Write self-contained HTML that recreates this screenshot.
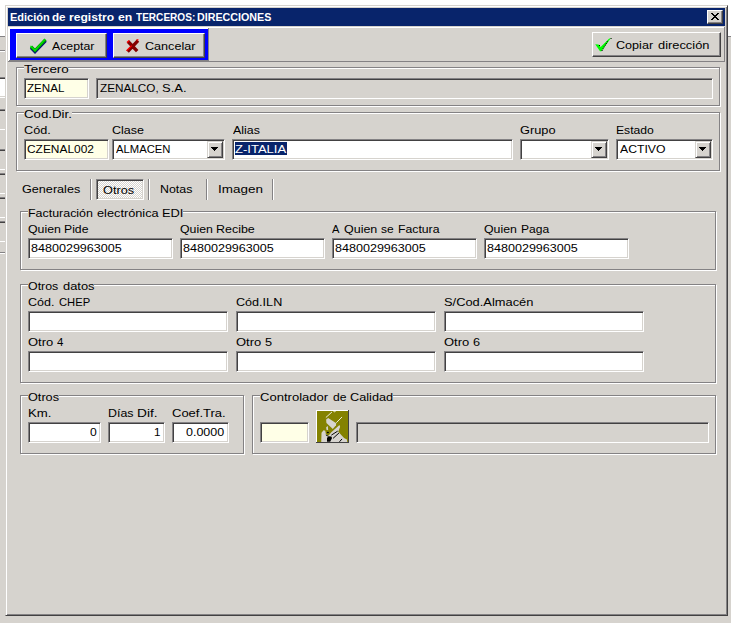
<!DOCTYPE html>
<html><head><meta charset="utf-8"><title>Edición de registro en TERCEROS: DIRECCIONES</title>
<style>
html,body{margin:0;padding:0;background:#d6d3ce}
body{width:731px;height:623px;overflow:hidden;background:#d6d3ce;position:relative;font-family:"Liberation Sans",sans-serif;font-size:11px;line-height:13px;color:#000}
div{position:absolute;box-sizing:border-box}
.t{position:absolute;white-space:pre;transform-origin:0 0;font-family:"Liberation Sans",sans-serif;font-size:11px;line-height:13px;height:13px}
.win{background:#d6d3ce;border:1px solid;border-color:#d6d3ce #424142 #424142 #d6d3ce;box-shadow:inset 1px 1px 0 #fff,inset -1px -1px 0 #848284}
.sk{border:1px solid;border-color:#848284 #fff #fff #848284;box-shadow:inset 1px 1px 0 #424142,inset -1px -1px 0 #d6d3ce}
.rb{background:#d6d3ce;border:1px solid;border-color:#fff #424142 #424142 #fff;box-shadow:inset -1px -1px 0 #848284}
.rb2{background:#d6d3ce;border:1px solid;border-color:#d6d3ce #424142 #424142 #d6d3ce;box-shadow:inset 1px 1px 0 #fff,inset -1px -1px 0 #848284}
.gb{border:1px solid #848284;box-shadow:1px 1px 0 #fff,inset 1px 1px 0 #fff}
.chk{background:conic-gradient(#fff 25%,#d6d3ce 0 50%,#fff 0 75%,#d6d3ce 0) 0 0/2px 2px}
</style></head>
<body>
<div style="left:0px;top:0px;width:731px;height:5px;background:#fff;"></div>
<div style="left:0px;top:0px;width:5px;height:36px;background:#fff;"></div>
<div style="left:728px;top:0px;width:3px;height:36px;background:#fff;"></div>
<div style="left:0px;top:36px;width:5px;height:1px;background:#848284;"></div>
<div style="left:728px;top:36px;width:3px;height:1px;background:#848284;"></div>
<div style="left:0px;top:50px;width:5px;height:1px;background:#848284;"></div>
<div style="left:0px;top:51px;width:5px;height:1px;background:#fff;"></div>
<div style="left:0px;top:77px;width:5px;height:1px;background:#848284;"></div>
<div style="left:0px;top:78px;width:5px;height:1px;background:#424142;"></div>
<div style="left:0px;top:79px;width:5px;height:17px;background:#fff;"></div>
<div style="left:0px;top:97px;width:5px;height:1px;background:#fff;"></div>
<div style="left:0px;top:109px;width:5px;height:1px;background:#848284;"></div>
<div style="left:0px;top:110px;width:5px;height:1px;background:#424142;"></div>
<div style="left:0px;top:129px;width:5px;height:1px;background:#fff;"></div>
<div style="left:0px;top:149px;width:5px;height:1px;background:#848284;"></div>
<div style="left:0px;top:150px;width:5px;height:1px;background:#424142;"></div>
<div style="left:0px;top:169px;width:5px;height:1px;background:#fff;"></div>
<div style="left:0px;top:173px;width:5px;height:1px;background:#848284;"></div>
<div style="left:0px;top:174px;width:5px;height:1px;background:#424142;"></div>
<div style="left:0px;top:193px;width:5px;height:1px;background:#fff;"></div>
<div style="left:0px;top:197px;width:5px;height:1px;background:#848284;"></div>
<div style="left:0px;top:198px;width:5px;height:1px;background:#424142;"></div>
<div style="left:0px;top:217px;width:5px;height:1px;background:#fff;"></div>
<div style="left:0px;top:221px;width:5px;height:1px;background:#848284;"></div>
<div style="left:0px;top:222px;width:5px;height:1px;background:#424142;"></div>
<div style="left:0px;top:241px;width:5px;height:1px;background:#fff;"></div>
<div style="left:0px;top:252px;width:5px;height:1px;background:#848284;"></div>
<div style="left:0px;top:253px;width:5px;height:1px;background:#fff;"></div>
<div class="win" style="left:5px;top:5px;width:723px;height:611px"></div>
<div style="left:8px;top:8px;width:717px;height:18px;background:#08246b;"></div>
<div class="rb" style="left:707px;top:10px;width:16px;height:14px"></div>
<div style="left:711px;top:13px;width:2px;height:1px;background:#000;"></div>
<div style="left:717px;top:13px;width:2px;height:1px;background:#000;"></div>
<div style="left:712px;top:14px;width:2px;height:1px;background:#000;"></div>
<div style="left:716px;top:14px;width:2px;height:1px;background:#000;"></div>
<div style="left:713px;top:15px;width:4px;height:1px;background:#000;"></div>
<div style="left:714px;top:16px;width:2px;height:1px;background:#000;"></div>
<div style="left:713px;top:17px;width:4px;height:1px;background:#000;"></div>
<div style="left:712px;top:18px;width:2px;height:1px;background:#000;"></div>
<div style="left:716px;top:18px;width:2px;height:1px;background:#000;"></div>
<div style="left:711px;top:19px;width:2px;height:1px;background:#000;"></div>
<div style="left:717px;top:19px;width:2px;height:1px;background:#000;"></div>
<div style="left:8px;top:27px;width:717px;height:1px;background:#fff;"></div>
<div style="left:8px;top:27px;width:1px;height:35px;background:#fff;"></div>
<div style="left:8px;top:61px;width:717px;height:1px;background:#848284;"></div>
<div style="left:724px;top:27px;width:1px;height:35px;background:#848284;"></div>
<div style="left:9px;top:28px;width:200px;height:1px;background:#fff;"></div>
<div style="left:9px;top:28px;width:1px;height:33px;background:#fff;"></div>
<div style="left:9px;top:60px;width:200px;height:1px;background:#848284;"></div>
<div style="left:208px;top:28px;width:1px;height:33px;background:#848284;"></div>
<div style="left:10px;top:29px;width:198px;height:31px;background:#0000ff;"></div>
<div class="rb" style="left:16px;top:33px;width:91px;height:25px"></div>
<div class="rb" style="left:113px;top:33px;width:92px;height:25px"></div>
<div class="rb" style="left:592px;top:32px;width:129px;height:25px"></div>
<svg style="position:absolute;left:28px;top:36px" width="20" height="19" viewBox="28 36 20 19">
<polyline points="31,47.7 35,51.7 45.6,40.7" fill="none" stroke="#000084" stroke-width="3.2" stroke-linejoin="miter"/>
<polyline points="31,46.5 35,50.5 45.5,39.5" fill="none" stroke="#009c00" stroke-width="3" stroke-linejoin="miter"/>
<polyline points="30.4,45.9 35,50.4 45,39.4" fill="none" stroke="#00f000" stroke-width="1.1" stroke-linejoin="miter"/>
</svg>
<svg style="position:absolute;left:124px;top:37px" width="18" height="18" viewBox="124 37 18 18">
<path d="M128 41.5 L137.2 51.2 M127.6 51.6 L138 40.6" fill="none" stroke="#840000" stroke-width="3.4" stroke-linecap="butt"/>
<path d="M127 42.4 L129.2 40.4 M126.6 50.8 L131.6 45.6 M136.6 40.2 L138.4 39.6" fill="none" stroke="#ff0000" stroke-width="1.3"/>
</svg>
<svg style="position:absolute;left:594px;top:36px" width="20" height="17" viewBox="594 36 20 17">
<path d="M595.2 44.2 L598.6 44.4 L600.6 47 L609 38.8 L611 38 L601.4 51.2 L600 51.2 Z" fill="#00ff00"/>
<g fill="#000"><rect x="610.6" y="38" width="1" height="1"/><rect x="606.8" y="41.2" width="1" height="1"/><rect x="605.8" y="43" width="1" height="1"/><rect x="604.8" y="44.6" width="1" height="1"/><rect x="603.6" y="46.4" width="1" height="1"/><rect x="602.6" y="48.2" width="1" height="1"/><rect x="601.6" y="50" width="1" height="1"/><rect x="599" y="45" width="1" height="1"/></g>
</svg>
<div class="gb" style="left:16px;top:67px;width:704px;height:39px"></div>
<div class="sk" style="left:24px;top:78px;width:65px;height:21px;background-color:#ffffe7"></div>
<div class="sk" style="left:96px;top:78px;width:617px;height:21px;background-color:#d6d3ce"></div>
<div class="gb" style="left:16px;top:112px;width:704px;height:59px"></div>
<div class="sk" style="left:24px;top:139px;width:85px;height:21px;background-color:#ffffe7"></div>
<div class="sk" style="left:112px;top:139px;width:113px;height:21px;background-color:#fff"></div>
<div class="rb2" style="left:207px;top:141px;width:16px;height:17px"></div>
<div style="left:211px;top:147px;width:7px;height:1px;background:#000;"></div>
<div style="left:212px;top:148px;width:5px;height:1px;background:#000;"></div>
<div style="left:213px;top:149px;width:3px;height:1px;background:#000;"></div>
<div style="left:214px;top:150px;width:1px;height:1px;background:#000;"></div>
<div class="sk" style="left:232px;top:139px;width:281px;height:21px;background-color:#fff"></div>
<div style="left:235px;top:142px;width:52px;height:13px;background:#08246b;"></div>
<div class="sk" style="left:520px;top:139px;width:89px;height:21px;background-color:#fff"></div>
<div class="rb2" style="left:591px;top:141px;width:16px;height:17px"></div>
<div style="left:595px;top:147px;width:7px;height:1px;background:#000;"></div>
<div style="left:596px;top:148px;width:5px;height:1px;background:#000;"></div>
<div style="left:597px;top:149px;width:3px;height:1px;background:#000;"></div>
<div style="left:598px;top:150px;width:1px;height:1px;background:#000;"></div>
<div class="sk" style="left:616px;top:139px;width:97px;height:21px;background-color:#fff"></div>
<div class="rb2" style="left:695px;top:141px;width:16px;height:17px"></div>
<div style="left:699px;top:147px;width:7px;height:1px;background:#000;"></div>
<div style="left:700px;top:148px;width:5px;height:1px;background:#000;"></div>
<div style="left:701px;top:149px;width:3px;height:1px;background:#000;"></div>
<div style="left:702px;top:150px;width:1px;height:1px;background:#000;"></div>
<div style="left:90px;top:179px;width:1px;height:21px;background:#848284;"></div>
<div style="left:91px;top:179px;width:1px;height:21px;background:#fff;"></div>
<div style="left:148px;top:179px;width:1px;height:21px;background:#848284;"></div>
<div style="left:149px;top:179px;width:1px;height:21px;background:#fff;"></div>
<div style="left:206px;top:179px;width:1px;height:21px;background:#848284;"></div>
<div style="left:207px;top:179px;width:1px;height:21px;background:#fff;"></div>
<div style="left:272px;top:179px;width:1px;height:21px;background:#848284;"></div>
<div style="left:273px;top:179px;width:1px;height:21px;background:#fff;"></div>
<div class="sk chk" style="left:96px;top:179px;width:48px;height:21px"></div>
<div class="gb" style="left:20px;top:211px;width:696px;height:59px"></div>
<div class="sk" style="left:28px;top:238px;width:145px;height:21px;background-color:#fff"></div>
<div class="sk" style="left:180px;top:238px;width:145px;height:21px;background-color:#fff"></div>
<div class="sk" style="left:332px;top:238px;width:145px;height:21px;background-color:#fff"></div>
<div class="sk" style="left:484px;top:238px;width:145px;height:21px;background-color:#fff"></div>
<div class="gb" style="left:20px;top:284px;width:696px;height:99px"></div>
<div class="sk" style="left:28px;top:311px;width:200px;height:21px;background-color:#fff"></div>
<div class="sk" style="left:28px;top:351px;width:200px;height:21px;background-color:#fff"></div>
<div class="sk" style="left:236px;top:311px;width:200px;height:21px;background-color:#fff"></div>
<div class="sk" style="left:236px;top:351px;width:200px;height:21px;background-color:#fff"></div>
<div class="sk" style="left:444px;top:311px;width:200px;height:21px;background-color:#fff"></div>
<div class="sk" style="left:444px;top:351px;width:200px;height:21px;background-color:#fff"></div>
<div class="gb" style="left:20px;top:395px;width:224px;height:59px"></div>
<div class="sk" style="left:28px;top:422px;width:73px;height:21px;background-color:#fff"></div>
<div class="sk" style="left:108px;top:422px;width:57px;height:21px;background-color:#fff"></div>
<div class="sk" style="left:172px;top:422px;width:57px;height:21px;background-color:#fff"></div>
<div class="gb" style="left:252px;top:395px;width:464px;height:59px"></div>
<div class="sk" style="left:260px;top:422px;width:49px;height:21px;background-color:#ffffe7"></div>
<div class="sk" style="left:356px;top:422px;width:353px;height:21px;background-color:#d6d3ce"></div>
<svg style="position:absolute;left:314px;top:408px" width="36" height="36" viewBox="0 0 622.8 622.8">
<rect x="34.6" y="34.6" width="571" height="571" fill="#848200"/>
<g fill="#d6d3ce">
<polygon points="210,200 245,175 385,265 380,300 325,365 215,260"/>
<polygon points="125,590 130,430 165,385 195,395 205,450 250,480 300,420 440,295 452,325 420,410 520,520 570,545 575,590"/>
<polygon points="210,335 240,310 245,385 215,375"/>
</g>
<g stroke="#fff" stroke-width="15" fill="none">
<path d="M205,165 L310,70 M385,255 L485,155 M335,55 L350,66 L375,55"/>
</g>
<polygon points="225,520 250,490 300,495 312,520 280,585 225,585" fill="#000"/>
<g stroke="#000" stroke-width="17" fill="none">
<path d="M205,465 L245,488 M300,470 L410,400 M330,525 L432,432 M440,585 L485,535"/>
</g>
<ellipse cx="240" cy="424" rx="19" ry="11" fill="#000"/>
<rect x="34.6" y="34.6" width="571" height="17.3" fill="#fff"/><rect x="34.6" y="34.6" width="17.3" height="571" fill="#fff"/>
<rect x="588.3" y="34.6" width="17.3" height="571" fill="#424142"/><rect x="34.6" y="588.3" width="571" height="17.3" fill="#424142"/>
</svg>
<div style="left:28px;top:208px;width:155px;height:11px;background:#d6d3ce"></div>
<div style="left:28px;top:281px;width:66px;height:11px;background:#d6d3ce"></div>
<div style="left:260px;top:392px;width:133px;height:11px;background:#d6d3ce"></div>
<div style="left:24px;top:64px;width:44px;height:11px;background:#d6d3ce"></div>
<div style="left:24px;top:109px;width:48px;height:11px;background:#d6d3ce"></div>
<div style="left:28px;top:392px;width:31px;height:11px;background:#d6d3ce"></div>
<span class="t" style="left:51.96px;top:40px;transform:scaleX(1.1186);">Aceptar</span>
<span class="t" style="left:145.00px;top:40px;transform:scaleX(1.1448);">Cancelar</span>
<span class="t" style="left:616.10px;top:39px;transform:scaleX(1.1446);">Copiar</span>
<span class="t" style="left:657.77px;top:39px;transform:scaleX(1.1681);">dirección</span>
<span class="t" style="left:9.75px;top:11px;transform:scaleX(0.9988);font-weight:bold;color:#fff;">Edición</span>
<span class="t" style="left:52.49px;top:11px;transform:scaleX(1.0600);font-weight:bold;color:#fff;">de</span>
<span class="t" style="left:69.36px;top:11px;transform:scaleX(1.1015);font-weight:bold;color:#fff;">registro</span>
<span class="t" style="left:117.97px;top:11px;transform:scaleX(1.1196);font-weight:bold;color:#fff;">en</span>
<span class="t" style="left:135.80px;top:11px;transform:scaleX(0.9144);font-weight:bold;color:#fff;">TERCEROS:</span>
<span class="t" style="left:196.86px;top:11px;transform:scaleX(0.9728);font-weight:bold;color:#fff;">DIRECCIONES</span>
<span class="t" style="left:23.88px;top:63px;transform:scaleX(1.2215);">Tercero</span>
<span class="t" style="left:27.14px;top:82px;transform:scaleX(1.0529);">ZENAL</span>
<span class="t" style="left:99.74px;top:82px;transform:scaleX(1.0681);">ZENALCO,</span>
<span class="t" style="left:161.62px;top:82px;transform:scaleX(1.1810);">S.A.</span>
<span class="t" style="left:24.17px;top:108px;transform:scaleX(1.2044);">Cod.Dir.</span>
<span class="t" style="left:24.20px;top:124px;transform:scaleX(1.1511);">Cód.</span>
<span class="t" style="left:112.11px;top:124px;transform:scaleX(1.1353);">Clase</span>
<span class="t" style="left:232.56px;top:124px;transform:scaleX(1.1251);">Alias</span>
<span class="t" style="left:520.13px;top:124px;transform:scaleX(1.1642);">Grupo</span>
<span class="t" style="left:615.70px;top:124px;transform:scaleX(1.1048);">Estado</span>
<span class="t" style="left:27.04px;top:143px;transform:scaleX(1.0844);">CZENAL002</span>
<span class="t" style="left:116.37px;top:143px;transform:scaleX(1.0251);">ALMACEN</span>
<span class="t" style="left:235.31px;top:143px;transform:scaleX(1.1838);color:#fff;">Z-ITALIA</span>
<span class="t" style="left:620.46px;top:143px;transform:scaleX(1.1103);">ACTIVO</span>
<span class="t" style="left:21.84px;top:183px;transform:scaleX(1.1478);">Generales</span>
<span class="t" style="left:103.07px;top:184px;transform:scaleX(1.1557);">Otros</span>
<span class="t" style="left:159.57px;top:183px;transform:scaleX(1.1273);">Notas</span>
<span class="t" style="left:217.65px;top:183px;transform:scaleX(1.2229);">Imagen</span>
<span class="t" style="left:27.87px;top:207px;transform:scaleX(1.1297);">Facturación</span>
<span class="t" style="left:96.58px;top:207px;transform:scaleX(1.1589);">electrónica</span>
<span class="t" style="left:161.83px;top:207px;transform:scaleX(1.1697);">EDI</span>
<span class="t" style="left:31.08px;top:242px;transform:scaleX(1.1412);">8480029963005</span>
<span class="t" style="left:183.08px;top:242px;transform:scaleX(1.1412);">8480029963005</span>
<span class="t" style="left:335.08px;top:242px;transform:scaleX(1.1412);">8480029963005</span>
<span class="t" style="left:487.08px;top:242px;transform:scaleX(1.1412);">8480029963005</span>
<span class="t" style="left:27.99px;top:223px;transform:scaleX(1.1196);">Quien</span>
<span class="t" style="left:64.49px;top:223px;transform:scaleX(1.1092);">Pide</span>
<span class="t" style="left:179.99px;top:223px;transform:scaleX(1.1196);">Quien</span>
<span class="t" style="left:216.47px;top:223px;transform:scaleX(1.1333);">Recibe</span>
<span class="t" style="left:331.98px;top:223px;transform:scaleX(1.0127);">A</span>
<span class="t" style="left:344.08px;top:223px;transform:scaleX(1.1337);">Quien</span>
<span class="t" style="left:381.43px;top:223px;transform:scaleX(1.0879);">se</span>
<span class="t" style="left:397.69px;top:223px;transform:scaleX(1.1132);">Factura</span>
<span class="t" style="left:483.99px;top:223px;transform:scaleX(1.1196);">Quien</span>
<span class="t" style="left:520.50px;top:223px;transform:scaleX(1.0973);">Paga</span>
<span class="t" style="left:27.99px;top:280px;transform:scaleX(1.1253);">Otros</span>
<span class="t" style="left:62.57px;top:280px;transform:scaleX(1.1709);">datos</span>
<span class="t" style="left:27.91px;top:296px;transform:scaleX(1.1375);">Cód.</span>
<span class="t" style="left:59.37px;top:296px;transform:scaleX(1.0186);">CHEP</span>
<span class="t" style="left:28.06px;top:336px;transform:scaleX(1.1808);">Otro</span>
<span class="t" style="left:57.17px;top:336px;transform:scaleX(1.0380);">4</span>
<span class="t" style="left:236.00px;top:296px;transform:scaleX(1.1458);">Cód.ILN</span>
<span class="t" style="left:236.06px;top:336px;transform:scaleX(1.1808);">Otro</span>
<span class="t" style="left:264.64px;top:336px;transform:scaleX(1.1587);">5</span>
<span class="t" style="left:443.83px;top:296px;transform:scaleX(1.1702);">S/Cod.Almacén</span>
<span class="t" style="left:444.06px;top:336px;transform:scaleX(1.1808);">Otro</span>
<span class="t" style="left:472.70px;top:336px;transform:scaleX(1.1543);">6</span>
<span class="t" style="left:27.88px;top:391px;transform:scaleX(1.1519);">Otros</span>
<span class="t" style="left:27.60px;top:407px;transform:scaleX(1.1983);">Km.</span>
<span class="t" style="left:107.77px;top:407px;transform:scaleX(1.1271);">Días</span>
<span class="t" style="left:136.55px;top:407px;transform:scaleX(1.2454);">Dif.</span>
<span class="t" style="left:172.28px;top:407px;transform:scaleX(1.1818);">Coef.Tra.</span>
<span class="t" style="left:89.96px;top:426px;transform:scaleX(1.1034);">0</span>
<span class="t" style="left:153.58px;top:426px;transform:scaleX(1.0538);">1</span>
<span class="t" style="left:186.45px;top:426px;transform:scaleX(1.1348);">0.0000</span>
<span class="t" style="left:259.78px;top:391px;transform:scaleX(1.1866);">Controlador</span>
<span class="t" style="left:332.50px;top:391px;transform:scaleX(1.0993);">de</span>
<span class="t" style="left:349.90px;top:391px;transform:scaleX(1.1548);">Calidad</span>
</body></html>
